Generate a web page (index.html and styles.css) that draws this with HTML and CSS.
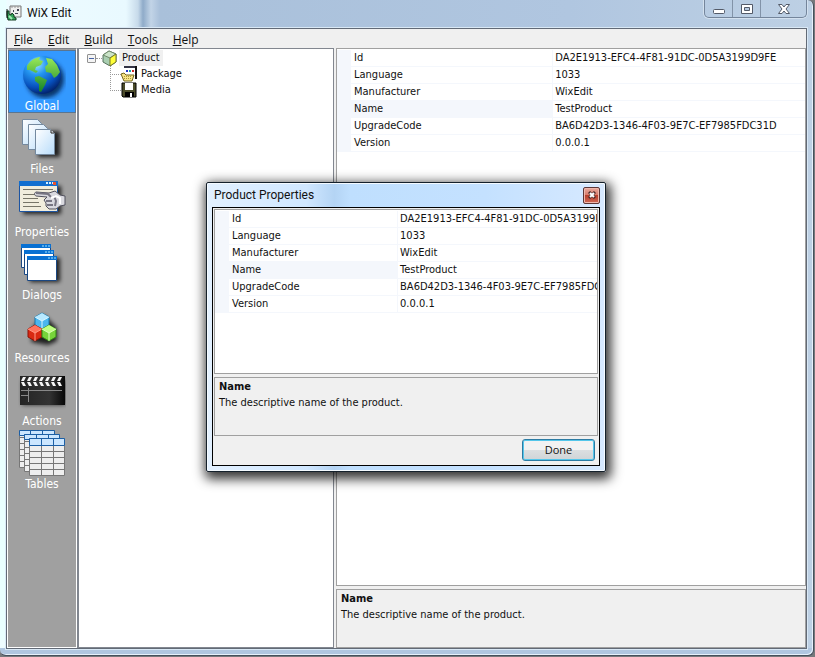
FILE: index.html
```html
<!DOCTYPE html>
<html lang="en">
<head>
    <meta charset="UTF-8">
    <title>WiX Edit</title>
    <meta name="viewport" content="width=device-width, initial-scale=1.0">
    <link rel="stylesheet" href="styles.css">
</head>
<body>
    <div class="window">
        <header class="titlebar">
            <svg class="app-icon" width="16" height="16" viewBox="0 0 16 16">
                <path d="M4 1h11v11H4z" fill="#eee" stroke="#777"/>
                <path d="M5 2h10" stroke="#999" stroke-dasharray="2 1"/>
                <path d="M7 5h1v2H7zM11 4h2v2h-2zM9 8h3v1H9z" fill="#445"/>
                <path d="M1 6h2v3l2 1 1-2 2 2v2l2 1v2H2L1 10z" fill="#36a45a" stroke="#123d20"/>
                <path d="M1 4v9" stroke="#111"/>
                <path d="M3 11l3 3" stroke="#a4e8b4" stroke-width="2"/>
            </svg>
            <h1>WiX Edit</h1>
            <div class="window-buttons">
                <button type="button" aria-label="Minimize">
                    <svg width="14" height="12" viewBox="0 0 14 12"><rect x="1.500" y="6.500" width="11" height="4" rx="1" fill="#fff" stroke="#535a68"/></svg>
                </button>
                <button type="button" aria-label="Maximize">
                    <svg width="14" height="12" viewBox="0 0 14 12"><path d="M1.500 1.500h11v9h-11z" fill="#fff" stroke="#535a68"/><path d="M4.500 4.500h5v3h-5z" fill="#b5c8df" stroke="#535a68"/></svg>
                </button>
                <button type="button" aria-label="Close" class="wide">
                    <svg width="14" height="12" viewBox="0 0 14 12"><path d="M1.500 1.500h3.500l2 2.500 2-2.500h3.500L9 6l3.500 4.500H9L7 8l-2 2.500H1.500L5 6z" fill="#fff" stroke="#535a68"/></svg>
                </button>
            </div>
        </header>

        <div class="client">
            <nav class="menubar">
                <button type="button"><u>F</u>ile</button>
                <button type="button"><u>E</u>dit</button>
                <button type="button"><u>B</u>uild</button>
                <button type="button"><u>T</u>ools</button>
                <button type="button"><u>H</u>elp</button>
            </nav>

            <main class="panes">
                <nav class="sidebar">
                    <a href="#global" class="side-item selected">
                        <svg width="48" height="48" viewBox="0 0 48 48">
                            <defs>
                                <radialGradient id="sea" cx="35%" cy="22%" r="80%">
                                    <stop offset="0" stop-color="#9ee4ff"/>
                                    <stop offset=".35" stop-color="#2496f0"/>
                                    <stop offset=".75" stop-color="#0750bd"/>
                                    <stop offset="1" stop-color="#02246f"/>
                                </radialGradient>
                                <linearGradient id="land" x2="0" y2="1">
                                    <stop offset="0" stop-color="#9bea58"/>
                                    <stop offset="1" stop-color="#128228"/>
                                </linearGradient>
                                <linearGradient id="paper" x2="1" y2="1">
                                    <stop offset="0" stop-color="#fff"/>
                                    <stop offset="1" stop-color="#b8dcfa"/>
                                </linearGradient>
                                <filter id="soft" x="-30%" y="-30%" width="160%" height="160%"><feGaussianBlur stdDeviation="2"/></filter>
                            </defs>
                            <circle cx="27" cy="28" r="19" fill="#001b46" opacity=".8" filter="url(#soft)"/>
                            <circle cx="24" cy="24" r="19" fill="url(#sea)"/>
                            <path d="M9 15c3-5 7-8 13-9l-1 3 4 1-2 4-5 2-1 3 3 1-2 2-6-3-3 0zM28 7l6 1 5 6 3 7-3 4-3 2-3-5-5-1-1-5 3-3zM17 26l4-1 8 4-2 5-4 7-2-1 0-7-4-3z" fill="url(#land)"/>
                        </svg>
                        <span>Global</span>
                    </a>
                    <a href="#files" class="side-item">
                        <svg width="48" height="48" viewBox="0 0 48 48">
                            <path d="M20 17h22v26H20z" fill="#000" opacity=".8" filter="url(#soft)"/>
                            <g fill="url(#paper)" stroke="#74899f">
                                <path d="M4.500 5.500h15l4 4v21h-19z"/>
                                <path d="M10.500 10.500h15l4 4v21h-19z"/>
                                <path d="M17.500 15.500h15l4 4v21h-19z"/>
                            </g>
                            <path d="M33 16v3h3" fill="#fff" stroke="#222"/>
                        </svg>
                        <span>Files</span>
                    </a>
                    <a href="#properties" class="side-item">
                        <svg width="48" height="48" viewBox="0 0 48 48">
                            <path d="M5 9h38v28H5z" fill="#000" opacity=".8" filter="url(#soft)"/>
                            <path d="M1.500 4.500h38v30h-38z" fill="#f1eddd" stroke="#1d55a2"/>
                            <path d="M1 4h39v5H1z" fill="#126fd0"/>
                            <path d="M28 6h7" stroke="#d8f1ff" stroke-width="2" stroke-dasharray="2 1"/><path d="M35 5h3v3h-3z" fill="#e65330"/>
                            <path d="M5 12.500h30M5 17.500h12M5 21.500h15M5 25.500h16M5 29.500h18" stroke="#777568"/>
                            <path d="M18 15c-2 1-2 3 0 4l11 1-3 3 2 3v3l3 3h7l4-3 5-1v-9l-5-1-5-4-6 2z" fill="#d9d9df" stroke="#51515d"/>
                            <path d="M18 16l12 1 3 3M28 24h6M29 28h6M36 19l2 5-1 5" fill="none" stroke="#777582" stroke-width="2"/>
                            <path d="M33 21l5-2 4 2v6" fill="none" stroke="#fff" stroke-width="2"/>
                        </svg>
                        <span>Properties</span>
                    </a>
                    <a href="#dialogs" class="side-item">
                        <svg width="48" height="48" viewBox="0 0 48 48">
                            <path d="M12 18h30v24H12z" fill="#000" opacity=".8" filter="url(#soft)"/>
                            <g fill="#fff" stroke="#1a4782">
                                <path d="M3.500 4.500h29v23h-29z"/><path d="M6.500 10.500h29v24h-29z"/><path d="M9.500 16.500h29v24h-29z"/>
                            </g>
                            <path d="M3 4h30v4H3zM6 10h30v4H6zM9 16h30v4H9z" fill="#0870d2"/>
                            <path d="M24 6h8M27 12h8M30 18h8" stroke="#a3e6ff" stroke-dasharray="2 1"/>
                        </svg>
                        <span>Dialogs</span>
                    </a>
                    <a href="#resources" class="side-item">
                        <svg width="48" height="48" viewBox="0 0 48 48">
                            <path d="M15 24l11-12 13 13v13l-9 4-17-3z" fill="#000" opacity=".8" filter="url(#soft)"/>
                            <g transform="translate(1 1)">
                                <path d="M16 13l7-4 7 4v9l-7 4-7-4z" fill="#4bb6ef" stroke="#1777ac"/><path d="M16 13l7-4 7 4-7 4z" fill="#b8e9ff"/><path d="M23 17v8M16 13l7 4 7-4" fill="none" stroke="#d9f6ff"/>
                                <path d="M9 25l7-4 7 4v8l-7 4-7-4z" fill="#d92912" stroke="#8c1308"/><path d="M9 25l7-4 7 4-7 4z" fill="#ff735e"/><path d="M16 29v8M9 25l7 4 7-4" fill="none" stroke="#ff9a86"/>
                                <path d="M23 25l7-4 7 4v8l-7 4-7-4z" fill="#77d43a" stroke="#328517"/><path d="M23 25l7-4 7 4-7 4z" fill="#c0ff83"/><path d="M30 29v8M23 25l7 4 7-4" fill="none" stroke="#dcffb8"/>
                            </g>
                        </svg>
                        <span>Resources</span>
                    </a>
                    <a href="#actions" class="side-item">
                        <svg width="48" height="48" viewBox="0 0 48 48">
                            <defs><linearGradient id="slate" x2="1"><stop stop-color="#242424"/><stop offset=".65" stop-color="#333"/><stop offset="1" stop-color="#080808"/></linearGradient></defs>
                            <path d="M4 14h43v25H4z" fill="#000" opacity=".7" filter="url(#soft)"/>
                            <g transform="translate(0 2)">
                                <path d="M2 8h45v29H2z" fill="url(#slate)"/>
                                <path d="M5 9h3l-2 4H3zM11 9h3l-2 4H9zM17 9h3l-2 4h-3zM23 9h3l-2 4h-3zM29 9h3l-2 4h-3zM35 9h3l-2 4h-3zM41 9h3l-2 4h-3zM3 14h3l2 4H5zM9 14h3l2 4h-3zM15 14h3l2 4h-3zM21 14h3l2 4h-3zM27 14h3l2 4h-3zM33 14h3l2 4h-3zM39 14h3l2 4h-3z" fill="#f6f6f6"/>
                                <path d="M3 22.500h41M3 27.500h7M10.500 20v14" stroke="#888"/>
                            </g>
                        </svg>
                        <span>Actions</span>
                    </a>
                    <a href="#tables" class="side-item">
                        <svg width="48" height="48" viewBox="0 0 48 48">
                            <g fill="#eee" stroke="#777">
                                <path d="M1.500 1.500h35v37h-35zM1 8.500h35M1 14.500h35M1 20.500h35M1 26.500h35M1 32.500h35M12.500 2v35M24.500 2v35"/>
                                <path d="M6.500 5.500h35v37h-35zM6 12.500h35M6 18.500h35M6 24.500h35M6 30.500h35M6 36.500h35M18.500 6v35M30.500 6v35"/>
                                <path d="M11.500 9.500h35v37h-35zM11 16.500h35M11 22.500h35M11 28.500h35M11 34.500h35M11 40.500h35M23.500 10v36M35.500 10v36"/>
                            </g>
                            <g fill="#cbe6ff" stroke="#1c5fa5">
                                <path d="M1.500 6.500v-5h35v4h-30v1zM12.500 1v4M24.500 1v4"/>
                                <path d="M6.500 10.500v-5h35v4h-30v1zM18.500 5v4M30.500 5v4"/>
                                <path d="M11.500 9.500h35v7h-35zM23.500 10v6M35.500 10v6"/>
                            </g>
                        </svg>
                        <span>Tables</span>
                    </a>
                </nav>

                <section class="tree-pane">
                    <ul class="tree">
                        <li>
                            <div class="tree-root">
                                <button type="button" class="expander" aria-label="Collapse Product"></button>
                                <i class="dots"></i>
                                <svg width="16" height="16" viewBox="0 0 16 16">
                                    <path d="M1 5l6-4 7 3v8l-6 4-7-4z" fill="#a9ceb1" stroke="#55715c"/>
                                    <path d="M1 5l6-4 7 3-6 4z" fill="#cbe4c9" stroke="#718a6b"/>
                                    <path d="M8 8l6-4v8l-6 4z" fill="#ffff38" stroke="#77782b"/>
                                </svg>
                                <span class="current">Product</span>
                            </div>
                            <ul class="branch">
                                <li><i class="dots"></i>
                                    <svg width="16" height="16" viewBox="0 0 16 16">
                                        <path d="M3 0h12v13H3z" fill="#fff"/><path d="M3 0h12v2H3z" fill="#334"/><path d="M14 0h2v13h-2z" fill="#111"/>
                                        <path d="M5 4h2v2H5z" fill="#2536c9"/><path d="M8 4h2v2H8z" fill="#14a7a7"/><path d="M11 4h2v2h-2z" fill="#d22626"/>
                                        <path d="M0 8l3-1 2 2h8l-2 6H3z" fill="#f7e589" stroke="#75661b"/><path d="M3 10.500h8M3 12.500h8" stroke="#ad9738" stroke-dasharray="1 1"/>
                                    </svg>
                                    <span>Package</span></li>
                                <li><i class="dots"></i>
                                    <svg width="16" height="16" viewBox="0 0 16 16">
                                        <path d="M1 1h14v14H2l-1-1z" fill="#4b4b2a" stroke="#000"/>
                                        <path d="M4 1h8v7H4z" fill="#fff"/><path d="M4 10h9v5H4z" fill="#000"/><path d="M9 11h2v4H9z" fill="#fff"/>
                                    </svg>
                                    <span>Media</span></li>
                            </ul>
                        </li>
                    </ul>
                </section>

                <section class="details">
                    <div class="grid-box">
                        <table class="props">
                            <colgroup><col class="gutter"><col class="label-col"><col></colgroup>
                            <tr><td></td><th scope="row">Id</th><td>DA2E1913-EFC4-4F81-91DC-0D5A3199D9FE</td></tr>
                            <tr><td></td><th scope="row">Language</th><td>1033</td></tr>
                            <tr><td></td><th scope="row">Manufacturer</th><td>WixEdit</td></tr>
                            <tr class="active"><td></td><th scope="row">Name</th><td>TestProduct</td></tr>
                            <tr><td></td><th scope="row">UpgradeCode</th><td>BA6D42D3-1346-4F03-9E7C-EF7985FDC31D</td></tr>
                            <tr><td></td><th scope="row">Version</th><td>0.0.0.1</td></tr>
                        </table>
                    </div>
                    <div class="help-box">
                        <h2>Name</h2>
                        <p>The descriptive name of the product.</p>
                    </div>
                </section>
            </main>
        </div>
    </div>

    <div class="dialog" role="dialog" aria-labelledby="dialog-title">
        <div class="dialog-title">
            <h2 id="dialog-title">Product Properties</h2>
            <button type="button" class="dialog-close" aria-label="Close">
                <svg width="8" height="8" viewBox="0 0 8 8"><path d="M1 1l6 6M7 1L1 7" stroke="#4b2a2a" stroke-width="3"/><path d="M2 2l4 4M6 2L2 6" stroke="#fff" stroke-width="2"/></svg>
            </button>
        </div>
        <div class="dialog-body">
            <div class="grid-box">
                <table class="props">
                    <colgroup><col class="gutter"><col class="label-col"><col></colgroup>
                    <tr><td></td><th scope="row">Id</th><td>DA2E1913-EFC4-4F81-91DC-0D5A3199D9FE</td></tr>
                    <tr><td></td><th scope="row">Language</th><td>1033</td></tr>
                    <tr><td></td><th scope="row">Manufacturer</th><td>WixEdit</td></tr>
                    <tr class="active"><td></td><th scope="row">Name</th><td>TestProduct</td></tr>
                    <tr><td></td><th scope="row">UpgradeCode</th><td>BA6D42D3-1346-4F03-9E7C-EF7985FDC31D</td></tr>
                    <tr><td></td><th scope="row">Version</th><td>0.0.0.1</td></tr>
                </table>
            </div>
            <div class="help-box">
                <h2>Name</h2>
                <p>The descriptive name of the product.</p>
            </div>
            <div class="dialog-actions">
                <button type="button" class="done">Done</button>
            </div>
        </div>
    </div>
</body>
</html>
```
FILE: styles.css
```css
* {
    box-sizing: border-box;
}
body {
    margin: 0;
    height: 100vh;
    padding: 0 1px 1px 0;
    background: #77797c;
    font-family: "DejaVu Sans Condensed", Tahoma, "DejaVu Sans", sans-serif;
    font-size: 11px;
    line-height: 16px;
    color: #111;
    overflow: hidden;
}
h1, h2, p, ul {
    margin: 0;
    padding: 0;
    font-size: inherit;
}
ul {
    list-style: none;
}
button {
    font: inherit;
    color: inherit;
    padding: 0;
}
svg {
    display: block;
    flex: none;
}

/* main window */
.window {
    height: 100%;
    display: flex;
    flex-direction: column;
    padding: 0 6px 6px;
    border: solid #46505c;
    border-width: 0 1px 1px 0;
    border-radius: 0 6px 6px 6px;
    box-shadow: inset -1px -1px #e6f0fa;
    background: linear-gradient(90deg, #e9ffff 0, #e9ffff 6px, transparent 7px) 0 0 / 100% 640px no-repeat,
        linear-gradient(#b0c6e0, #b0c6e0) 0 100% / 100% 7px no-repeat,
        linear-gradient(90deg, #eefcff 0, #e9f9ff 126px, #c7daea 138px, #8fabc9 143px, #c2d4e7 151px, #a9c0da 160px, #b0c6e0 70%, #bdd0e4);
}
.titlebar {
    height: 28px;
    flex: none;
    display: flex;
    align-items: center;
    gap: 5px;
    padding-bottom: 2px;
}
.titlebar h1,
.dialog-title h2 {
    flex: 1;
    font-family: Roboto, "Noto Sans", sans-serif;
    font-size: 12px;
    font-weight: normal;
}
.window-buttons {
    align-self: flex-start;
    display: flex;
    height: 18px;
    border: 1px solid #74859b;
    border-top: 0;
    border-radius: 0 0 5px 5px;
    box-shadow: 0 0 0 1px #d3e1ef;
}
.window-buttons button {
    width: 28px;
    display: grid;
    place-items: center;
    border: 0;
    border-right: 1px solid #8293a8;
    background: none;
}
.window-buttons .wide {
    width: 45px;
    border: 0;
}
.client {
    flex: 1;
    min-height: 0;
    display: flex;
    flex-direction: column;
    border: 1px solid #626a76;
    background: #f0f0f0;
    box-shadow: 0 0 0 1px #d9e8f5;
}
.menubar {
    height: 19px;
    flex: none;
    display: flex;
    gap: 15px;
    padding: 2px 7px 0;
}
.menubar button {
    border: 0;
    background: none;
    font-family: "Open Sans", "Noto Sans", sans-serif;
    font-size: 12px;
}
.panes {
    flex: 1;
    min-height: 0;
    display: grid;
    grid-template-columns: 70px 257px 1fr;
}

/* section icons */
.sidebar {
    padding-top: 1px;
    border: 1px solid #fff;
    border-top-color: #80828a;
    background: #a0a0a0;
}
.side-item {
    height: 63px;
    display: flex;
    flex-direction: column;
    align-items: center;
    border: 1px solid transparent;
    color: #fff;
    text-decoration: none;
}
.side-item span {
    margin-top: -1px;
    font-size: 12px;
}
.side-item.selected {
    border-color: #5a7590;
    background: #3399ff;
}

/* tree */
.tree-pane {
    padding: 1px 8px;
    border: 1px solid #828790;
    border-left-width: 2px;
    background: #fff;
}
.tree-root,
.branch li {
    display: flex;
    align-items: center;
    height: 16px;
}
.tree-root span,
.branch span {
    padding: 0 3px;
    margin-left: 1px;
}
.tree .current {
    background: #f0f0f0;
}
.expander {
    width: 9px;
    height: 9px;
    border: 1px solid #919191;
    border-radius: 1px;
    background: linear-gradient(#4763a5, #4763a5) center / 5px 1px no-repeat, #f4f4f4;
}
.dots {
    width: 6px;
    border-top: 1px dotted #999;
}
.branch {
    margin-left: 23px;
    background: repeating-linear-gradient(#999 0, #999 1px, transparent 1px, transparent 2px) 0 0 / 1px 24px no-repeat;
}
.branch .dots {
    width: 11px;
}

/* property grids */
.details {
    display: flex;
    flex-direction: column;
    gap: 3px;
    padding-left: 2px;
    min-width: 0;
}
.grid-box {
    flex: 1;
    min-height: 0;
    overflow: hidden;
    padding-top: 1px;
    border: 1px solid #a0a0a0;
    background: #fff;
}
.props {
    width: 100%;
    table-layout: fixed;
    border-collapse: separate;
    border-spacing: 0;
}
.gutter {
    width: 14px;
}
.label-col {
    width: 43%;
}
.props th,
.props td {
    height: 17px;
    padding: 0 0 0 3px;
    border-bottom: 1px solid #f4f7fc;
    font-weight: normal;
    text-align: left;
    white-space: nowrap;
    overflow: hidden;
}
.props td:first-child,
.props .active th {
    background: #f4f7fc;
}
.props td:last-child {
    padding-left: 2px;
    border-left: 1px solid #f4f7fc;
}
.help-box {
    height: 59px;
    flex: none;
    padding: 1px 4px;
    border: 1px solid #a0a0a0;
    background: #f0f0f0;
}
.help-box h2 {
    font-weight: bold;
}

/* dialog */
.dialog {
    position: absolute;
    left: 206px;
    top: 182px;
    width: 400px;
    height: 290px;
    display: flex;
    flex-direction: column;
    padding: 0 5px 5px;
    border: 1px solid #14202b;
    border-radius: 2px;
    background: linear-gradient(90deg, #e2f0ff, #d0e7ff 25%, #b4d4f4 32%, #bfdffe 36%, #c4e1ff 70%, #d7e9ff);
    box-shadow: inset 0 0 0 1px #f4faff, 2px 4px 12px 3px rgba(0, 0, 0, 0.8);
}
.dialog-title {
    height: 24px;
    flex: none;
    display: flex;
    align-items: center;
    padding: 0 0 0 2px;
}
.dialog-close {
    width: 17px;
    height: 17px;
    display: grid;
    place-items: center;
    border: 1px solid #5c3636;
    border-radius: 2px;
    background: linear-gradient(#e9aa9e, #d77d6d 45%, #b9402d 50%, #cd6854);
    box-shadow: inset 0 0 0 1px #efb7ac;
}
.dialog-body {
    flex: 1;
    min-height: 0;
    display: flex;
    flex-direction: column;
    gap: 3px;
    padding: 1px;
    border: 1px solid #000;
    background: #f0f0f0;
}
.dialog .label-col {
    width: 44%;
}
.dialog-actions {
    display: flex;
    justify-content: flex-end;
    padding: 0 3px 3px;
}
.done {
    width: 73px;
    height: 22px;
    border: 1px solid #2c7ba3;
    border-radius: 3px;
    background: linear-gradient(#f2f2f2 48%, #dcdfe1 50%, #cfd4d7);
    box-shadow: inset 0 0 0 1px #54c6ea;
    font-family: "Open Sans", "Noto Sans", sans-serif;
}
```
